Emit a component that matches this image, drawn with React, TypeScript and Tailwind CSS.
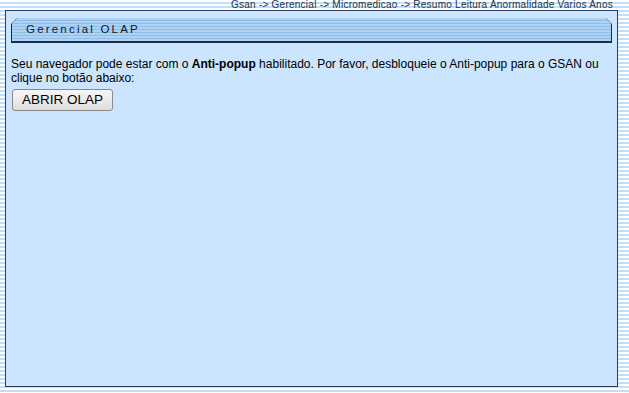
export default function App() {
  return (
    <div
      className="w-[629px] h-[393px] overflow-hidden bg-[repeating-linear-gradient(to_bottom,#ffffff_0px,#ffffff_2px,#bfe0f7_2px,#bfe0f7_4px)] font-['Liberation_Sans',Arial,sans-serif]"
    >
      {/* Breadcrumb */}
      <div className="h-[10px] pr-[16px] text-right text-[10px] leading-[10px] tracking-[0.25px] text-[#1f3350]">
        Gsan -&gt; Gerencial -&gt; Micromedicao -&gt; Resumo Leitura Anormalidade Varios Anos
      </div>

      {/* Panel */}
      <div className="ml-[5px] w-[613px] h-[377px] border border-[#2b3d5a] bg-[#cbe5fe] px-[5px] pt-[6px]">
        {/* Header */}
        <div className="h-[25px] bg-[#1d2b45] [clip-path:polygon(6px_0,calc(100%-6px)_0,100%_6px,100%_100%,0_100%,0_6px)]">
          <div className="ml-[1px] mt-[1px] h-[23px] w-[calc(100%-2px)] flex items-center pl-[14px] bg-[repeating-linear-gradient(to_bottom,#aed2f4_0px,#aed2f4_2px,#8fbdea_2px,#8fbdea_3px)] [clip-path:polygon(5px_0,calc(100%-5px)_0,100%_5px,100%_100%,0_100%,0_5px)]">
            <span className="text-[11.5px] tracking-[2.2px] text-[#0a1a2e]">Gerencial OLAP</span>
          </div>
        </div>

        <p className="mt-[14px] text-[12px] leading-[14px] text-black">
          Seu navegador pode estar com o <b>Anti-popup</b> habilitado. Por favor, desbloqueie o Anti-popup para o GSAN ou clique no botão abaixo:
        </p>

        <button className="mt-[4px] ml-[1px] h-[22px] w-[101px] rounded-[3px] border border-[#8a8a8a] bg-[linear-gradient(to_bottom,#f6f6f6,#dedede)] text-[13.5px] leading-[20px] text-black">
          ABRIR OLAP
        </button>
      </div>
    </div>
  );
}
